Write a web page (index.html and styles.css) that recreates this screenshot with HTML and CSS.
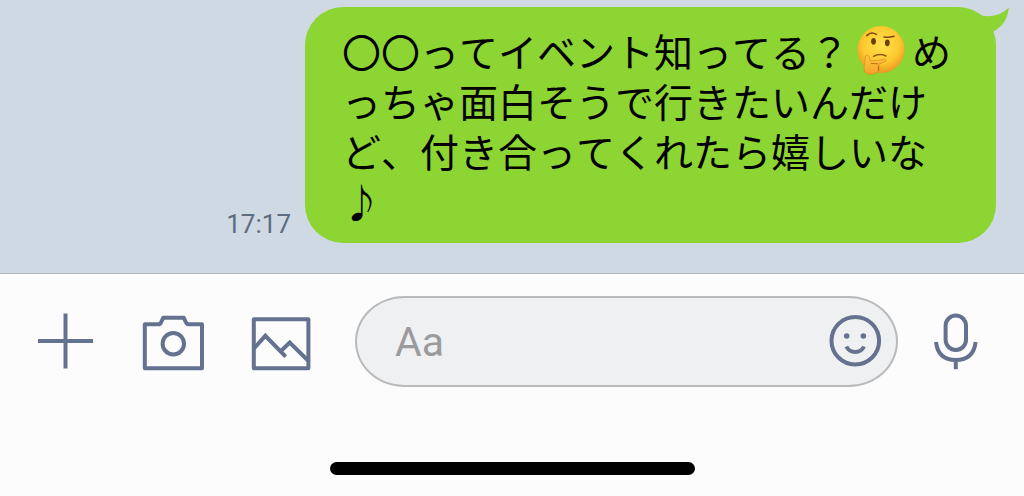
FILE: styles.css
```
* {
    box-sizing: border-box;
}
body {
    margin: 0;
    min-height: 100vh;
    display: flex;
    flex-direction: column;
    background-color: #fcfcfc;
    font-family: "Noto Sans CJK JP", sans-serif;
}

/* トーク画面 */
.chat {
    display: flex;
    justify-content: flex-end;
    align-items: flex-end;
    gap: 14px;
    padding: 7px 28px 30px;
    background-color: #cfd9e3;
}
.time {
    padding-bottom: 4px;
    color: #5d6c80;
    font-family: Roboto, sans-serif;
    font-size: 26px;
    line-height: 30px;
}
.bubble {
    position: relative;
    max-width: 691px;
    padding: 18px 37px;
    border-radius: 38px;
    background-color: #8dd532;
}
.tail {
    position: absolute;
    top: 0;
    right: -14px;
    width: 40px;
    height: 36px;
    fill: #8dd532;
}
.message {
    margin: 0;
    color: #000;
    font-size: 39px;
    font-kerning: none; /* 全角の文字幅をそろえる */
    line-height: 50px;
    line-break: anywhere;
}
.emoji {
    width: 48px;
    height: 50px;
    margin: 0 7px 0 8px;
    vertical-align: top;
}

/* 入力エリア */
.footer {
    flex: 1;
    border-top: 1px solid #b4b8bc;
    background-color: #fcfcfc;
}
.composer {
    display: flex;
    align-items: center;
    padding: 22px 38px 0 35px;
}
.tools {
    display: flex;
    gap: 48px;
    margin-right: 44px;
}
.icon-button {
    flex: none;
    padding: 0;
    border: none;
    background: none;
    cursor: pointer;
}
.icon {
    display: block;
    width: 60px;
    height: 61px;
    overflow: visible;
    fill: none;
    stroke: #64728f;
    stroke-width: 4;
    stroke-linejoin: round;
}
.dot {
    fill: #64728f;
    stroke: none;
}
.field {
    flex: 1;
    display: flex;
    align-items: center;
    min-width: 0;
    height: 91px;
    margin-right: 28px;
    padding: 0 10px 0 38px;
    border: 2px solid #b9babb;
    border-radius: 50px / 46px;
    background-color: #eff0f2;
}
.field-input {
    flex: 1;
    min-width: 0;
    padding: 0;
    border: none;
    outline: none;
    background: none;
    color: #000;
    font-family: Roboto, sans-serif;
    font-size: 41px;
}
.field-input::placeholder {
    color: #9b9b9c;
}
.home-bar {
    width: 365px;
    height: 13px;
    margin: 75px auto 0;
    border-radius: 7px;
    background-color: #000;
}
```

FILE: index.html
```
<!DOCTYPE html>
<html lang="ja">
<head>
    <meta charset="UTF-8">
    <meta name="viewport" content="width=device-width, initial-scale=1.0">
    <title>トーク</title>
    <link rel="stylesheet" href="styles.css">
</head>
<body>
    <!-- トーク画面 -->
    <main class="chat">
        <time class="time">17:17</time>
        <div class="bubble">
            <svg class="tail" viewBox="0 0 40 36" aria-hidden="true">
                <path d="M8 6 L10.5 8.3 Q28 12 38.8 0.6 Q37 18 23.3 24.5 L8 24 Z"/>
            </svg>
            <p class="message">〇〇ってイベント知ってる？<svg class="emoji" viewBox="0 0 48 50" role="img" aria-label="考え中の顔">
                <defs>
                    <radialGradient id="face" cx="0.5" cy="0.4" r="0.6">
                        <stop offset="0" stop-color="#ffe04a"/>
                        <stop offset="0.65" stop-color="#fdc92f"/>
                        <stop offset="1" stop-color="#ee9820"/>
                    </radialGradient>
                    <linearGradient id="hand" x1="0" y1="0" x2="0" y2="1">
                        <stop offset="0" stop-color="#ffcf3f"/>
                        <stop offset="1" stop-color="#f3a02c"/>
                    </linearGradient>
                </defs>
                <circle cx="24" cy="24.5" r="23.5" fill="url(#face)"/>
                <ellipse cx="16.5" cy="16.3" rx="2.4" ry="3.4" fill="#6d3f0c"/>
                <ellipse cx="30.3" cy="17.8" rx="2.4" ry="3.4" fill="#6d3f0c"/>
                <path d="M9.8 10.6 Q14 6 19.4 9.4" fill="none" stroke="#7c480e" stroke-width="1.6" stroke-linecap="round"/>
                <path d="M27 12 Q32 12.6 37 11.2" fill="none" stroke="#7c480e" stroke-width="1.6" stroke-linecap="round"/>
                <path d="M16.5 31.4 Q22 28 29 31" fill="none" stroke="#95590f" stroke-width="1.5" stroke-linecap="round"/>
                <path d="M8.6 31 Q10.5 29 12.2 31.5 L13.3 36 Q21 35.6 27.5 34.2 Q30 34.3 28.4 36.4 L21.5 39.2 Q24.5 42 21.8 45.5 Q19 49.5 13 49.3 Q6.5 49 7 42 Z" fill="url(#hand)" stroke="#e08d20" stroke-width="0.8"/>
                <path d="M14 38.5 L21.5 38.8 M21.4 41 V46" fill="none" stroke="#bd6f18" stroke-width="1"/>
            </svg>めっちゃ面白そうで行きたいんだけど、付き合ってくれたら嬉しいな♪</p>
        </div>
    </main>

    <!-- 入力エリア -->
    <footer class="footer">
        <form class="composer">
            <div class="tools">
                <button type="button" class="icon-button" aria-label="メニュー">
                    <svg class="icon" viewBox="0 0 60 61">
                        <path d="M30.5 2.5 V57.5 M3 30 H58"/>
                    </svg>
                </button>
                <button type="button" class="icon-button" aria-label="カメラ">
                    <svg class="icon" viewBox="0 0 60 61">
                        <path d="M1.8 13.3 H15.5 Q17.3 13.3 18 11.5 L20.3 6.7 H40.7 L43 11.5 Q44 13.3 45.8 13.3 H59 V57.3 H1.8 Z"/>
                        <circle cx="30.3" cy="32.7" r="10.7"/>
                    </svg>
                </button>
                <button type="button" class="icon-button" aria-label="写真">
                    <svg class="icon" viewBox="0 0 60 61">
                        <path d="M2.8 8.3 H57.4 V57.3 H2.8 Z"/>
                        <path d="M3 37.5 L14.3 24.8 L34.7 45.7 M30 40 L38.7 31.5 L57 49.5" stroke-linejoin="miter"/>
                    </svg>
                </button>
            </div>
            <div class="field">
                <input type="text" class="field-input" placeholder="Aa" aria-label="メッセージ">
                <button type="button" class="icon-button" aria-label="スタンプ">
                    <svg class="icon" viewBox="0 0 60 61">
                        <circle cx="29.3" cy="29.7" r="23.8"/>
                        <circle class="dot" cx="20.7" cy="25" r="2.8"/>
                        <circle class="dot" cx="37.4" cy="25" r="2.8"/>
                        <path d="M20.4 35.5 Q23 41 29.2 41 Q35.4 41 38 35.5"/>
                    </svg>
                </button>
            </div>
            <button type="button" class="icon-button" aria-label="音声">
                <svg class="icon" viewBox="0 0 60 61">
                    <rect x="19.6" y="4.5" width="20.4" height="34.5" rx="10.2"/>
                    <path d="M10 31 Q12 49 29.8 49 Q47.6 49 49.6 31 M29.8 49 V58.3"/>
                </svg>
            </button>
        </form>
        <div class="home-bar"></div>
    </footer>
</body>
</html>
```
